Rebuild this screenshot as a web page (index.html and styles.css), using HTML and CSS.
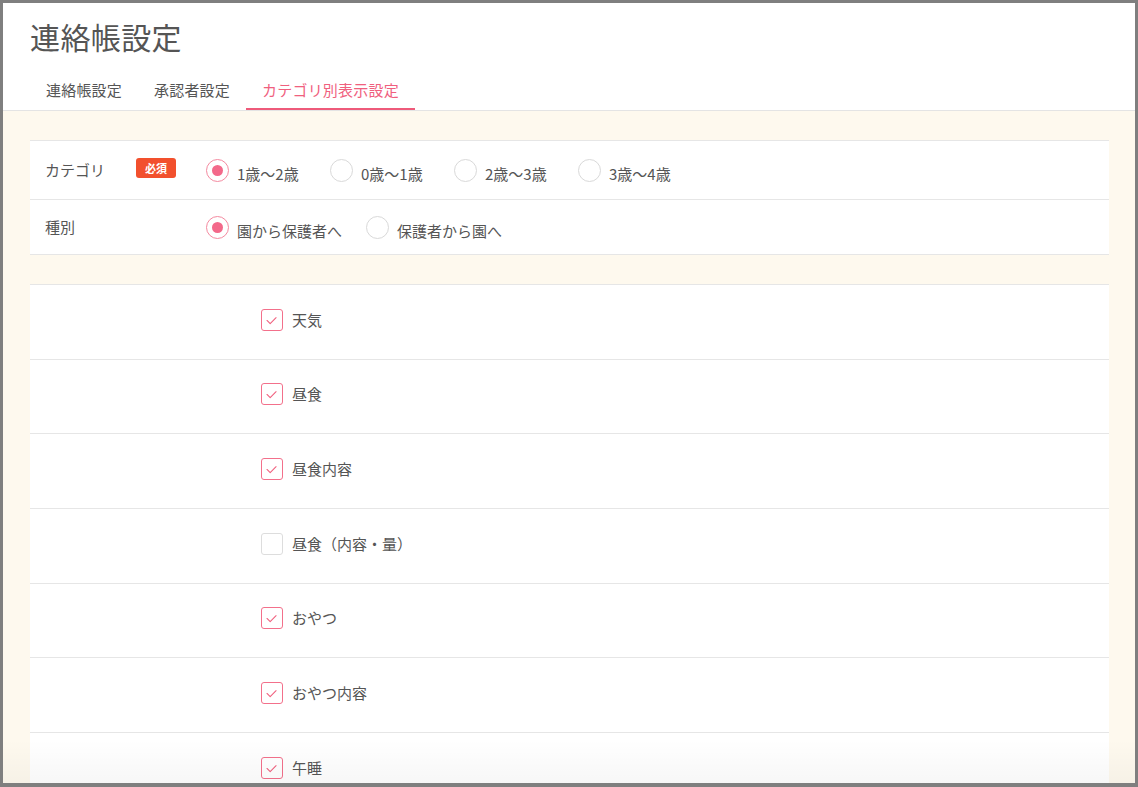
FILE: index.html
```html
<!DOCTYPE html>
<html lang="ja">
<head>
<meta charset="utf-8">
<title>連絡帳設定</title>
<link rel="stylesheet" href="styles.css">
</head>
<body>
<div class="frame">
  <header class="header">
    <h1 class="title">連絡帳設定</h1>
    <nav class="tabs">
      <a class="tab">連絡帳設定</a>
      <a class="tab">承認者設定</a>
      <a class="tab tab-active">カテゴリ別表示設定</a>
    </nav>
  </header>
  <main class="content">
    <section class="card card-filter">
      <div class="filter-row filter-row-category">
        <div class="filter-label"><span class="label-text">カテゴリ</span><span class="badge">必須</span></div>
        <div class="options options-category">
          <label class="option"><span class="radio radio-on"></span><span class="option-text">1歳〜2歳</span></label>
          <label class="option"><span class="radio"></span><span class="option-text">0歳〜1歳</span></label>
          <label class="option"><span class="radio"></span><span class="option-text">2歳〜3歳</span></label>
          <label class="option"><span class="radio"></span><span class="option-text">3歳〜4歳</span></label>
        </div>
      </div>
      <div class="filter-row filter-row-type">
        <div class="filter-label"><span class="label-text">種別</span></div>
        <div class="options options-type">
          <label class="option"><span class="radio radio-on"></span><span class="option-text">園から保護者へ</span></label>
          <label class="option"><span class="radio"></span><span class="option-text">保護者から園へ</span></label>
        </div>
      </div>
    </section>
    <section class="card card-items">
      <div class="item-row"><span class="checkbox checkbox-on"><svg viewBox="0 0 22 22" width="20" height="20"><polyline points="5.5,11.5 9,15 15.5,8.5"/></svg></span><span class="item-text">天気</span></div>
      <div class="item-row"><span class="checkbox checkbox-on"><svg viewBox="0 0 22 22" width="20" height="20"><polyline points="5.5,11.5 9,15 15.5,8.5"/></svg></span><span class="item-text">昼食</span></div>
      <div class="item-row"><span class="checkbox checkbox-on"><svg viewBox="0 0 22 22" width="20" height="20"><polyline points="5.5,11.5 9,15 15.5,8.5"/></svg></span><span class="item-text">昼食内容</span></div>
      <div class="item-row"><span class="checkbox"></span><span class="item-text">昼食（内容・量）</span></div>
      <div class="item-row"><span class="checkbox checkbox-on"><svg viewBox="0 0 22 22" width="20" height="20"><polyline points="5.5,11.5 9,15 15.5,8.5"/></svg></span><span class="item-text">おやつ</span></div>
      <div class="item-row"><span class="checkbox checkbox-on"><svg viewBox="0 0 22 22" width="20" height="20"><polyline points="5.5,11.5 9,15 15.5,8.5"/></svg></span><span class="item-text">おやつ内容</span></div>
      <div class="item-row"><span class="checkbox checkbox-on"><svg viewBox="0 0 22 22" width="20" height="20"><polyline points="5.5,11.5 9,15 15.5,8.5"/></svg></span><span class="item-text">午睡</span></div>
    </section>
  </main>
</div>
</body>
</html>
```
FILE: styles.css
```css
html, body {
  margin: 0;
  padding: 0;
}
body {
  font-family: "Noto Sans CJK JP", "Noto Sans", sans-serif;
  color: #555;
  background: #7f7f7f;
}
.frame {
  position: relative;
  box-sizing: border-box;
  width: 1138px;
  height: 787px;
  border: 3px solid #7f7f7f;
  border-bottom-width: 4px;
  background: #fef9ee;
  overflow: hidden;
}
.frame::after {
  content: "";
  position: absolute;
  left: 0;
  right: 0;
  bottom: 0;
  height: 44px;
  background: linear-gradient(to bottom, rgba(0,0,0,0), rgba(0,0,0,0.03));
  pointer-events: none;
}
.header {
  background: #fff;
  border-bottom: 1px solid #e4e4e4;
  padding: 13px 0 0 27px;
}
.title {
  margin: 0;
  font-size: 30px;
  line-height: 40px;
  font-weight: 400;
  color: #555;
  letter-spacing: 0.4px;
}
.tabs {
  display: flex;
  margin-top: 23px;
}
.tab {
  display: block;
  padding: 0 16px 7px;
  font-size: 15px;
  line-height: 22px;
  letter-spacing: 0.2px;
  color: #555;
  border-bottom: 2px solid transparent;
}
.tab-active {
  color: #f0607e;
  border-bottom-color: #ee5a7a;
}
.content {
  padding: 29px 26px 0 27px;
}
.card {
  background: #fff;
  border-top: 1px solid #e6e6e6;
}
.card-filter {
  margin-bottom: 29px;
}
.filter-row {
  display: flex;
  align-items: center;
  padding-left: 15px;
  border-bottom: 1px solid #e6e6e6;
  font-size: 15px;
}
.filter-row-category {
  height: 58px;
}
.filter-row-type {
  height: 54px;
}
.filter-label {
  width: 161px;
  flex: none;
  display: flex;
  align-items: center;
}
.label-text {
  width: 91px;
  line-height: 22px;
}
.badge {
  display: inline-flex;
  align-items: center;
  justify-content: center;
  width: 40px;
  height: 20px;
  margin-top: -4px;
  border-radius: 3px;
  background: #f2502d;
  color: #fff;
  font-size: 11px;
  font-weight: 700;
}
.options {
  display: flex;
  align-items: center;
}
.options-type {
  gap: 24px;
}
.options-category .option {
  width: 124px;
}
.option {
  display: flex;
  align-items: center;
  flex: none;
}
.radio {
  box-sizing: border-box;
  width: 23px;
  height: 23px;
  border-radius: 50%;
  border: 1px solid #d9d9d9;
  background: #fff;
  display: flex;
  align-items: center;
  justify-content: center;
  flex: none;
}
.radio-on {
  border: 1.5px solid #f48aa0;
}
.radio-on::after {
  content: "";
  width: 11px;
  height: 11px;
  border-radius: 50%;
  background: #f3698a;
}
.option-text {
  margin-left: 8px;
  padding-top: 8px;
  line-height: 22px;
  font-size: 15px;
  color: #555;
}
.item-row {
  box-sizing: border-box;
  height: 74.67px;
  display: flex;
  align-items: center;
  padding-left: 231px;
  padding-bottom: 4px;
  border-bottom: 1px solid #e6e6e6;
}
.checkbox {
  box-sizing: border-box;
  width: 22px;
  height: 22px;
  border: 1px solid #ddd;
  border-radius: 3px;
  display: flex;
  align-items: center;
  justify-content: center;
  flex: none;
  background: #fff;
}
.checkbox-on {
  border: 1.5px solid #f3708b;
}
.checkbox svg polyline {
  fill: none;
  stroke: #f0607e;
  stroke-width: 1.2;
  stroke-linecap: round;
  stroke-linejoin: round;
}
.item-text {
  margin-left: 9px;
  font-size: 15px;
  line-height: 22px;
  color: #555;
}
```
